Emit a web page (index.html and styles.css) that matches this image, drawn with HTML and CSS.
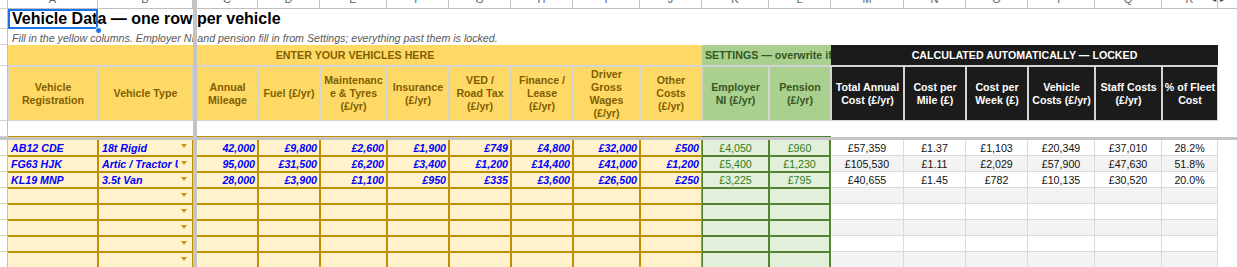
FILE: index.html
```html
<!DOCTYPE html>
<html lang="en">
<head>
<meta charset="utf-8">
<title>Vehicle Data</title>
<link rel="stylesheet" href="styles.css">
</head>
<body>
<div class="sheet">
  <div class="row r-colhdr">
    <div class="gut"></div>
    <div class="lt">A</div><div class="lt">B</div><div class="fz"></div>
    <div class="lt">C</div><div class="lt">D</div><div class="lt">E</div><div class="lt">F</div>
    <div class="lt">G</div><div class="lt">H</div><div class="lt">I</div><div class="lt">J</div>
    <div class="lt">K</div><div class="lt">L</div><div class="lt">M</div><div class="lt">N</div>
    <div class="lt">O</div><div class="lt">P</div><div class="lt">Q</div><div class="lt">R</div>
    <div class="lt-rest"><span class="scr">&#9664;</span><span class="scr">&#9654;</span></div>
  </div>

  <div class="row r-title">
    <div class="gut"></div>
    <div class="title">Vehicle Data — one row per vehicle</div>
    <div class="sel"><span class="handle"></span></div>
    <div class="fz fz-over"></div>
  </div>

  <div class="row r-sub">
    <div class="gut"></div>
    <div class="subtitle">Fill in the yellow columns. Employer NI and pension fill in from Settings; everything past them is locked.</div>
    <div class="fz fz-over"></div>
  </div>

  <div class="row r-band">
    <div class="gut"></div>
    <div class="band band-y">ENTER YOUR VEHICLES HERE</div>
    <div class="band band-g">SETTINGS — overwrite if needed</div>
    <div class="band band-k">CALCULATED AUTOMATICALLY — LOCKED</div>
    <div class="rest"></div>
    <div class="fz fz-over"></div>
  </div>

  <div class="row r-head">
    <div class="gut"></div>
    <div class="hd hy">Vehicle<br>Registration</div>
    <div class="hd hy">Vehicle Type</div>
    <div class="fz"></div>
    <div class="hd hy">Annual<br>Mileage</div>
    <div class="hd hy">Fuel (£/yr)</div>
    <div class="hd hy">Maintenanc<br>e &amp; Tyres<br>(£/yr)</div>
    <div class="hd hy">Insurance<br>(£/yr)</div>
    <div class="hd hy">VED /<br>Road Tax<br>(£/yr)</div>
    <div class="hd hy">Finance /<br>Lease<br>(£/yr)</div>
    <div class="hd hy">Driver<br>Gross<br>Wages<br>(£/yr)</div>
    <div class="hd hy">Other<br>Costs<br>(£/yr)</div>
    <div class="hd hg">Employer<br>NI (£/yr)</div>
    <div class="hd hg">Pension<br>(£/yr)</div>
    <div class="hd hk">Total Annual<br>Cost (£/yr)</div>
    <div class="hd hk">Cost per<br>Mile (£)</div>
    <div class="hd hk">Cost per<br>Week (£)</div>
    <div class="hd hk">Vehicle<br>Costs (£/yr)</div>
    <div class="hd hk">Staff Costs<br>(£/yr)</div>
    <div class="hd hk">% of Fleet<br>Cost</div>
    <div class="rest"></div>
  </div>

  <div class="row r-blank">
    <div class="gut"></div>
    <div class="bl bl-y"></div>
    <div class="bl bl-g"></div>
    <div class="bl bl-k"></div>
    <div class="rest"></div>
    <div class="fz fz-over"></div>
  </div>

  <div class="fzh"></div>

  <div class="row r-data first">
    <div class="gut"></div>
    <div class="d in c-a">AB12 CDE</div>
    <div class="d in c-b"><span class="t">18t Rigid</span><i class="dd"></i></div>
    <div class="fz"></div>
    <div class="d in num c-c">42,000</div>
    <div class="d in num">£9,800</div>
    <div class="d in num">£2,600</div>
    <div class="d in num">£1,900</div>
    <div class="d in num">£749</div>
    <div class="d in num">£4,800</div>
    <div class="d in num">£32,000</div>
    <div class="d in num">£500</div>
    <div class="d st">£4,050</div>
    <div class="d st st-last">£960</div>
    <div class="d calc">£57,359</div>
    <div class="d calc">£1.37</div>
    <div class="d calc">£1,103</div>
    <div class="d calc">£20,349</div>
    <div class="d calc">£37,010</div>
    <div class="d calc">28.2%</div>
    <div class="rest"></div>
  </div>

  <div class="row r-data alt">
    <div class="gut"></div>
    <div class="d in c-a">FG63 HJK</div>
    <div class="d in c-b"><span class="t">Artic / Tractor Unit</span><i class="dd"></i></div>
    <div class="fz"></div>
    <div class="d in num c-c">95,000</div>
    <div class="d in num">£31,500</div>
    <div class="d in num">£6,200</div>
    <div class="d in num">£3,400</div>
    <div class="d in num">£1,200</div>
    <div class="d in num">£14,400</div>
    <div class="d in num">£41,000</div>
    <div class="d in num">£1,200</div>
    <div class="d st">£5,400</div>
    <div class="d st st-last">£1,230</div>
    <div class="d calc">£105,530</div>
    <div class="d calc">£1.11</div>
    <div class="d calc">£2,029</div>
    <div class="d calc">£57,900</div>
    <div class="d calc">£47,630</div>
    <div class="d calc">51.8%</div>
    <div class="rest"></div>
  </div>

  <div class="row r-data">
    <div class="gut"></div>
    <div class="d in c-a">KL19 MNP</div>
    <div class="d in c-b"><span class="t">3.5t Van</span><i class="dd"></i></div>
    <div class="fz"></div>
    <div class="d in num c-c">28,000</div>
    <div class="d in num">£3,900</div>
    <div class="d in num">£1,100</div>
    <div class="d in num">£950</div>
    <div class="d in num">£335</div>
    <div class="d in num">£3,600</div>
    <div class="d in num">£26,500</div>
    <div class="d in num">£250</div>
    <div class="d st">£3,225</div>
    <div class="d st st-last">£795</div>
    <div class="d calc">£40,655</div>
    <div class="d calc">£1.45</div>
    <div class="d calc">£782</div>
    <div class="d calc">£10,135</div>
    <div class="d calc">£30,520</div>
    <div class="d calc">20.0%</div>
    <div class="rest"></div>
  </div>

  <div class="row r-data alt">
    <div class="gut"></div>
    <div class="d in c-a"></div>
    <div class="d in c-b"><span class="t"></span><i class="dd"></i></div>
    <div class="fz"></div>
    <div class="d in c-c"></div><div class="d in"></div><div class="d in"></div><div class="d in"></div>
    <div class="d in"></div><div class="d in"></div><div class="d in"></div><div class="d in"></div>
    <div class="d st"></div><div class="d st st-last"></div>
    <div class="d calc"></div><div class="d calc"></div><div class="d calc"></div>
    <div class="d calc"></div><div class="d calc"></div><div class="d calc"></div>
    <div class="rest"></div>
  </div>

  <div class="row r-data">
    <div class="gut"></div>
    <div class="d in c-a"></div>
    <div class="d in c-b"><span class="t"></span><i class="dd"></i></div>
    <div class="fz"></div>
    <div class="d in c-c"></div><div class="d in"></div><div class="d in"></div><div class="d in"></div>
    <div class="d in"></div><div class="d in"></div><div class="d in"></div><div class="d in"></div>
    <div class="d st"></div><div class="d st st-last"></div>
    <div class="d calc"></div><div class="d calc"></div><div class="d calc"></div>
    <div class="d calc"></div><div class="d calc"></div><div class="d calc"></div>
    <div class="rest"></div>
  </div>

  <div class="row r-data alt">
    <div class="gut"></div>
    <div class="d in c-a"></div>
    <div class="d in c-b"><span class="t"></span><i class="dd"></i></div>
    <div class="fz"></div>
    <div class="d in c-c"></div><div class="d in"></div><div class="d in"></div><div class="d in"></div>
    <div class="d in"></div><div class="d in"></div><div class="d in"></div><div class="d in"></div>
    <div class="d st"></div><div class="d st st-last"></div>
    <div class="d calc"></div><div class="d calc"></div><div class="d calc"></div>
    <div class="d calc"></div><div class="d calc"></div><div class="d calc"></div>
    <div class="rest"></div>
  </div>

  <div class="row r-data">
    <div class="gut"></div>
    <div class="d in c-a"></div>
    <div class="d in c-b"><span class="t"></span><i class="dd"></i></div>
    <div class="fz"></div>
    <div class="d in c-c"></div><div class="d in"></div><div class="d in"></div><div class="d in"></div>
    <div class="d in"></div><div class="d in"></div><div class="d in"></div><div class="d in"></div>
    <div class="d st"></div><div class="d st st-last"></div>
    <div class="d calc"></div><div class="d calc"></div><div class="d calc"></div>
    <div class="d calc"></div><div class="d calc"></div><div class="d calc"></div>
    <div class="rest"></div>
  </div>

  <div class="row r-data alt">
    <div class="gut"></div>
    <div class="d in c-a"></div>
    <div class="d in c-b"><span class="t"></span><i class="dd"></i></div>
    <div class="fz"></div>
    <div class="d in c-c"></div><div class="d in"></div><div class="d in"></div><div class="d in"></div>
    <div class="d in"></div><div class="d in"></div><div class="d in"></div><div class="d in"></div>
    <div class="d st"></div><div class="d st st-last"></div>
    <div class="d calc"></div><div class="d calc"></div><div class="d calc"></div>
    <div class="d calc"></div><div class="d calc"></div><div class="d calc"></div>
    <div class="rest"></div>
  </div>
</div>
</body>
</html>
```

FILE: styles.css
```css
* { box-sizing: border-box; }

html, body {
  margin: 0;
  background: #ffffff;
  overflow: hidden;
}

body {
  font-family: "Liberation Sans", Arial, sans-serif;
  font-size: 10.67px;
  color: #000;
}

.sheet {
  margin-top: -11px;
  --cols: 8px 90px 95px 4px 61px 62px 67px 62px 62px 62px 67px 62px 67px 62px 73px 62px 62px 67px 67px 56px 1fr;
}

.row {
  display: grid;
  grid-template-columns: var(--cols);
}

.row > * {
  grid-row: 1;
  min-width: 0;
}

/* gutter (row numbers column) */
.gut {
  border-right: 1px solid #c0c0c0;
  border-bottom: 1px solid #cfcfcf;
}

/* frozen pane divider */
.fz {
  grid-column: 4;
  background: #c4c4c4;
}
.fz-over {
  position: relative;
  z-index: 2;
}
.fzh {
  height: 3px;
  background: #c4c4c4;
}

/* column letters */
.r-colhdr {
  height: 20px;
  border-bottom: 1px solid #c0c0c0;
}
.lt {
  border-right: 1px solid #c0c0c0;
  text-align: center;
  line-height: 20px;
  font-size: 11px;
  color: #5f6368;
}
.lt-rest {
  display: flex;
  gap: 4px;
  line-height: 20px;
  margin-left: -8px;
  font-size: 8px;
  color: #444;
}

/* title rows */
.r-title { height: 20px; }
.r-sub { height: 16px; }

.title {
  grid-column: 2 / -1;
  display: flex;
  align-items: center;
  padding-left: 4px;
  font-size: 16px;
  font-weight: bold;
  white-space: nowrap;
  color: #000;
}
.sel {
  grid-column: 2;
  border: 2px solid #1a73e8;
  position: relative;
  z-index: 3;
}
.handle {
  position: absolute;
  right: -6px;
  bottom: -7px;
  width: 7px;
  height: 7px;
  border-radius: 50%;
  background: #1a73e8;
  border: 1px solid #ffffff;
}
.subtitle {
  grid-column: 2 / -1;
  display: flex;
  align-items: center;
  padding-left: 4px;
  padding-top: 1px;
  font-style: italic;
  font-size: 10.67px;
  color: #595959;
  white-space: nowrap;
}

/* section band */
.r-band { height: 21px; }
.band {
  display: flex;
  align-items: center;
  font-weight: bold;
  white-space: nowrap;
  overflow: hidden;
  border-bottom: 1px solid #d4d4d4;
}
.band-y {
  grid-column: 2 / 13;
  justify-content: center;
  background: #ffd966;
  color: #7f6000;
}
.band-g {
  grid-column: 13 / 15;
  padding-left: 3px;
  background: #a9d08e;
  color: #375623;
}
.band-k {
  grid-column: 15 / 21;
  justify-content: center;
  background: #1b1b1b;
  color: #ffffff;
}

/* header row */
.r-head { height: 55px; }
.hd {
  display: flex;
  align-items: center;
  justify-content: center;
  text-align: center;
  font-weight: bold;
  line-height: 13px;
  white-space: nowrap;
  overflow: hidden;
  border: 1px solid #d4d4d4;
}
.hy { background: #ffd966; color: #7f6000; }
.hg { background: #a9d08e; color: #375623; }
.hk { background: #1b1b1b; color: #ffffff; }

/* blank row under headers */
.r-blank { height: 16px; }
.bl-y {
  grid-column: 2 / 13;
  border-bottom: 1px solid #bf9000;
}
.bl-g {
  grid-column: 13 / 15;
  border-bottom: 1px solid #548235;
}
.bl-k { grid-column: 15 / 21; }

/* data rows */
.r-data { height: 16px; }
.d {
  display: flex;
  align-items: center;
  white-space: nowrap;
  overflow: hidden;
  padding: 0 3px;
}
.in {
  background: #fff2cc;
  border: 1px solid #bf9000;
  color: #0000ff;
  font-weight: bold;
  font-style: italic;
}
.first .in, .first .st { border-top-width: 0; }
.c-a { border-left-width: 0; }
.c-c { border-left-width: 0; }
.num { justify-content: flex-end; padding-right: 2px; }

.c-b { padding-right: 5px; }
.c-b .t {
  flex: 1;
  min-width: 0;
  overflow: hidden;
}
.dd {
  flex: none;
  width: 0;
  height: 0;
  margin-left: 3px;
  margin-top: -3px;
  border-left: 3px solid transparent;
  border-right: 3px solid transparent;
  border-top: 4px solid #c99a1a;
}

.st {
  justify-content: center;
  background: #e2efda;
  border: 1px solid #548235;
  color: #2f7d1a;
}
.st-last { border-right-width: 2px; }

.calc {
  justify-content: center;
  border-right: 1px solid #dadada;
  border-bottom: 1px solid #dadada;
  color: #111111;
  background: #ffffff;
}
.alt .calc { background: #f3f3f3; }
```
